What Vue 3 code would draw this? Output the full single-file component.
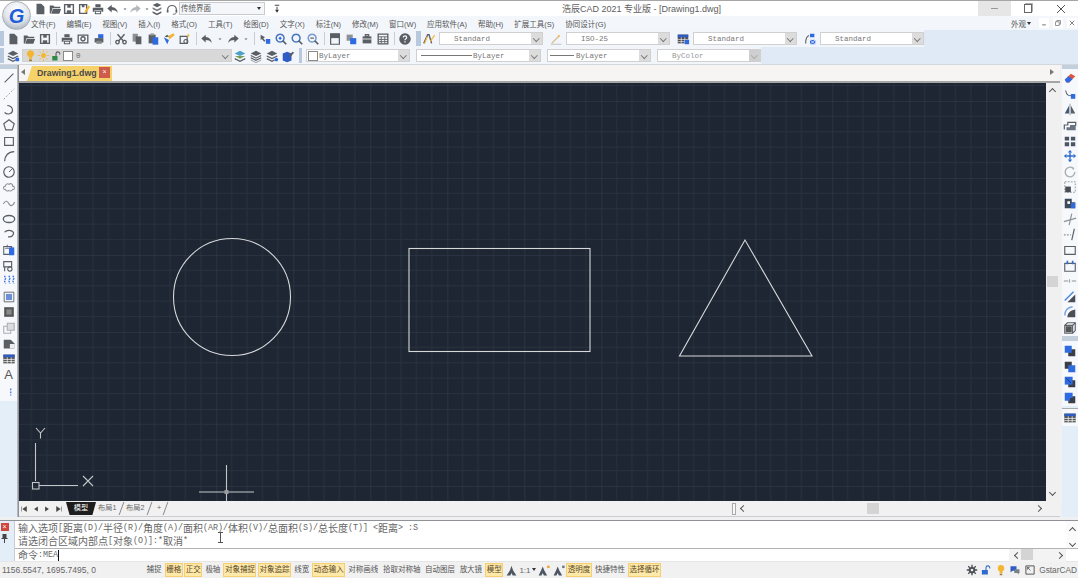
<script setup>
import { h } from 'vue'

const G = '#5a5f66'
const L = '#8d9298'
const B = '#2f6be0'
const Y = '#f2b632'

// 图标路径：[d, fill, stroke, strokeWidth, dash]
const ICONS = {
  new: [['M4 2h5.5L13 5.5V14H4z', G]],
  open: [['M2 4h4l1.5 1.5H14V7H5L3.5 13H2z', G], ['M5.5 8H15l-2 5.5H3.8z', G]],
  save: [['M3 3h10v10H3z', 'none', G, 1.6], ['M6 3h4v3.5H6z', G], ['M5.5 9.5h5V13h-5z', G]],
  saveas: [['M3 3h8v10H3z', 'none', G, 1.6], ['M5.5 3h3v3h-3z', G], ['M9 10l4-6 2 1.5-4 6-2.5 1z', Y]],
  print: [['M5 2.5h6V6H5z', G], ['M2 6.5h12V11h-2V9.5H4V11H2z', G], ['M5 10.5h6v3H5z', 'none', G, 1.2]],
  preview: [['M2.5 3.5h11v9h-11z', 'none', G, 1.5], ['M8 5.5a2.4 2.4 0 1 0 .01 0z', 'none', G, 1.6]],
  publish: [['M3 7h10v5H3z', G], ['M5 10h6v3.5H5z', '#888'], ['M7 2.5h6V7H7z', B]],
  cut: [['M4 2.5l7 8M12 2.5l-7 8', 'none', G, 1.6], ['M4 9.5a2 2 0 1 0 .01 0zM12 9.5a2 2 0 1 0 .01 0z', 'none', G, 1.5]],
  copy: [['M3 2h6v9H3z', L], ['M6.5 5H13v9H6.5z', G]],
  paste: [['M3 3h8v10H3z', G], ['M5 1.5h4V4H5z', '#999'], ['M7.5 6H14v8.5H7.5z', B]],
  match: [['M2 6l6 3-2 5z', B], ['M7 4.5l6-3 1.5 2-6 5z', Y], ['M3 5l3-2 2 2-3 1z', G]],
  block: [['M2.5 5h8v8h-8z', 'none', G, 1.4], ['M9 8.5a2.3 2.3 0 1 0 .01 0z', 'none', G, 1.2], ['M11 2l2.5 1.5-2.5 3z', Y]],
  undo: [['M6.5 3L1.5 7.5l5 4.5V9c3 0 5 .7 7 3.5C13 8.5 10.5 6 6.5 5.8z', G]],
  redo: [['M9.5 3l5 4.5-5 4.5V9c-3 0-5 .7-7 3.5C3 8.5 5.5 6 9.5 5.8z', G]],
  redog: [['M9.5 3l5 4.5-5 4.5V9c-3 0-5 .7-7 3.5C3 8.5 5.5 6 9.5 5.8z', '#b5b8bc']],
  caret: [['M5 7h6l-3 3z', G]],
  pan: [['M3 3l5 3-2 1 2.5 3-1.5 1-2.5-3L3 9z', G], ['M9 8h5v5.5H9z', B]],
  zoomr: [['M7 2.5a4.5 4.5 0 1 0 .01 0z', 'none', '#4a78c0', 1.8], ['M10 10l4 4', 'none', G, 2], ['M7 5l2 2-2 2-2-2z', B]],
  zoomw: [['M7 2.5a4.5 4.5 0 1 0 .01 0z', 'none', '#4a78c0', 1.8], ['M10 10l4 4', 'none', G, 2]],
  zoomp: [['M7 2.5a4.5 4.5 0 1 0 .01 0z', 'none', '#7a9ccf', 1.8], ['M10 10l4 4', 'none', G, 2], ['M5 7h4', 'none', G, 1.4]],
  prop: [['M3 2h10v12H3z', 'none', G, 1.4], ['M3 2h10v5H3z', G]],
  layers2: [['M3 3h7v7H3z', L], ['M7 7h7v7H7z', B]],
  box: [['M3 5h10v8H3z', G], ['M6 3h4v2H6z', 'none', G, 1.2], ['M3 8h10', 'none', '#eee', 1]],
  calc: [['M2.5 2.5h11v11h-11z', 'none', G, 1.5], ['M2.5 5.5h11M2.5 8.5h11M2.5 11h11M6 5.5v8M10 5.5v8', 'none', G, 1]],
  help: [['M8 1.5a6.5 6.5 0 1 0 .01 0z', G], ['M6 6.3c0-2.5 4-2.5 4 0 0 1.5-2 1.5-2 3', 'none', '#fff', 1.3], ['M7.3 10.5h1.4v1.4H7.3z', '#fff']],
  textst: [['M2 13L6.5 3H8l3 10', 'none', G, 1.6], ['M9 10l5-7 1 1-5 7z', Y], ['M3 13l3-8', 'none', Y, 1.4]],
  dimst: [['M3 13l9-9', 'none', '#d9b98a', 1.4], ['M2 14h12', 'none', '#c4c4c4', 1.2], ['M11 3l2 2-3 .5z', Y]],
  table: [['M2 3h12v10H2z', '#4f4f58'], ['M2 3h12v3H2z', '#2e5cc4'], ['M2 8.5h12M2 11h12M6 6v7M10 6v7', 'none', '#fff', 0.7], ['M10 9h5v5h-5z', B]],
  mleader: [['M3 13C3 8 4 5 7 4', 'none', G, 1.3], ['M8 2h5v4H8z', B], ['M8 9h6v5H8z', B], ['M8 9l6 5M14 9l-6 5', 'none', '#fff', 0.8]],
  layerman: [['M8 2l6 3-6 3-6-3z', G], ['M2 8l6 3 6-3', 'none', G, 1.5], ['M2 11l6 3 4-2', 'none', G, 1.5], ['M11 10h4v4h-4z', B]],
  bulb: [['M8 1.5a4.2 4.2 0 0 0-2 8V12h4V9.5a4.2 4.2 0 0 0-2-8z', Y], ['M6.3 12.8h3.4V15H6.3z', '#a57c28']],
  sun: [['M8 5a3 3 0 1 0 .01 0z', Y], ['M8 1v3M8 12v3M1 8h3M12 8h3M3 3l2 2M11 11l2 2M13 3l-2 2M3 13l2-2', 'none', Y, 1]],
  lockg: [['M3 8h7v6H3z', '#2f8a4a'], ['M8 8V5a2.5 2.5 0 0 1 5 0v1', 'none', '#555', 1.4]],
  lay1: [['M8 2l6 3-6 3-6-3z', '#4aa0c8'], ['M2 8l6 3 6-3z', '#7b9d58'], ['M2 11l6 3 6-3', 'none', G, 1.5]],
  lay2: [['M8 2l6 3-6 3-6-3z', G], ['M2 7.5l6 3 6-3', 'none', G, 1.3], ['M2 10l6 3 6-3', 'none', G, 1.3], ['M2 12.5l6 3 6-3', 'none', L, 1]],
  lay3: [['M8 2l6 3-6 3-6-3z', G], ['M2 8l6 3 6-3', 'none', G, 1.5], ['M2 11l6 3 3-1.5', 'none', G, 1.5], ['M13 10a2 2 0 1 0 .01 0z', B]],
  lay4: [['M2 5l5-2 5 2v8l-5 2-5-2z', '#2e5cc4'], ['M9 8l4-5 2 1-4 5z', G]],
  line: [['M3 13L13 3', 'none', G, 1.2], ['M3 13h.01M13 3h.01', 'none', B, 3]],
  xline: [['M2 14L14 2', 'none', L, 1, '2 2'], ['M5 11h.01M11 5h.01', 'none', B, 3]],
  poly: [['M3 12c3 3 9 2 9-3 0-3-3-5-6-5', 'none', G, 1.3], ['M3 12h.01M6 4h.01M12 9h.01M8 13h.01', 'none', B, 3]],
  pent: [['M8 2l6 4.5-2.3 7H4.3L2 6.5z', 'none', G, 1.3]],
  rect: [['M3 4h10v9H3z', 'none', G, 1.3], ['M13 4h.01M3 13h.01', 'none', B, 3]],
  arc: [['M3 14C3 8 7 3 14 3', 'none', G, 1.4], ['M3 14h.01M14 3h.01M5.5 6.5h.01', 'none', B, 3]],
  circle: [['M8 2a6 6 0 1 0 .01 0z', 'none', G, 1.3], ['M8 8l4-4', 'none', G, 1.1], ['M8 8h.01', 'none', B, 3]],
  cloud: [['M4 11c-3 0-3-4 0-4 0-3 3-3 4-2 2-2 5 0 4 2 3 0 3 4 0 4-1 2-3 2-4 1-2 1-3 1-4-1z', 'none', L, 1.2]],
  spline: [['M1.5 9c3-5 5-3 6.5 0s4 3 6.5-2', 'none', L, 1.3]],
  ellipse: [['M8 4c4 0 6.5 2 6.5 4s-2.5 4-6.5 4-6.5-2-6.5-4 2.5-4 6.5-4z', 'none', G, 1.5], ['M8 4h.01M1.5 8h.01M14.5 8h.01', 'none', B, 3]],
  earc: [['M3 6c2-3 8-3 10 0 1 3-2 6-6 5', 'none', G, 1.5], ['M3 6h.01M7 11h.01', 'none', B, 3]],
  insert: [['M2 4h9v9H2z', 'none', G, 1.2], ['M3.5 6h5M6 2v3', 'none', G, 1], ['M8 5h6v9H8z', B]],
  mkblock: [['M2 3h9v6H2z', 'none', G, 1.3], ['M9 9a2.5 2.5 0 1 0 .01 0z', 'none', G, 1.3], ['M3 9v5', 'none', G, 1.3]],
  point: [['M3 2l1 3-1 3 1 3M8 2l1 3-1 3 1 3M12.5 2l1 3-1 3 1 3', 'none', B, 1.5, '2 1']],
  hatch: [['M2.5 2.5h11v11h-11z', 'none', G, 1], ['M4.5 4.5h7v7h-7z', '#6e8fd8'], ['M2.5 2.5h.01M13.5 2.5h.01M2.5 13.5h.01M13.5 13.5h.01', 'none', G, 3]],
  grad: [['M2.5 2.5h11v11h-11z', '#555'], ['M5 5h6v6H5z', '#8a8a8a']],
  region: [['M2 6h8v8H2z', 'none', '#a9adb2', 1.2], ['M6 2.5h8v8H6z', '#dcdcdc', '#a9adb2', 1.2]],
  wipe: [['M2 3h8l4 4v6H2z', G], ['M9 8h5v5H9z', '#eee']],
  tbl: [['M1.5 3h13v10h-13z', '#565656'], ['M1.5 3h13v3h-13z', '#2e5cc4'], ['M1.5 8.5h13M1.5 11h13M6 6v7M10.5 6v7', 'none', '#fff', 0.8]],
  addpt: [['M3 3h.01', 'none', G, 3.5], ['M10 5v8', 'none', B, 1.4, '2 1.5'], ['M10 14h.01', 'none', G, 3.5]],
  erase: [['M2 10l7-7 5 3-7 7H4z', '#e0533d'], ['M2 10l4-4 5 3-4 4H4z', B]],
  rcopy: [['M3 3h.01', 'none', G, 4], ['M3 4c1 6 4 6 7 6', 'none', G, 1.2], ['M9 8h5v5.5H9z', B]],
  mirror: [['M2 13L7 4v9z', '#3f5a78'], ['M14 13L9 4v9z', G], ['M8 2v13', 'none', L, 1]],
  offset: [['M1.5 13V8h4V5h9v4', 'none', G, 1.4], ['M4 14v-3.5h4V8h6.5v6z', '#6a7480']],
  array: [['M2 3h5v4.5H2zM9 3h5v4.5H9zM2 9.5h5V14H2zM9 9.5h5V14H9z', '#4b5563']],
  move: [['M8 1l2.5 3h-5zM8 15l-2.5-3h5zM1 8l3-2.5v5zM15 8l-3 2.5v-5z', '#2e6ad0'], ['M8 4v8M4 8h8', 'none', '#2e6ad0', 1.6]],
  rotate: [['M13.5 8a5.5 5.5 0 1 1-2-4.2', 'none', '#a9adb2', 1.5], ['M10 2l3 1.5-1.5 2.5z', '#a9adb2']],
  scale: [['M2 2h12v12H2z', 'none', L, 1, '2 1.5'], ['M2.5 7.5H9V14H2.5z', '#4b4f55']],
  stretch: [['M2 3h8v4h4v7H2z', '#3f4a58'], ['M9 8h5v6H9z', B], ['M5 6h3v3H5z', '#fff']],
  trim: [['M1 11l14-4', 'none', L, 1.3], ['M10 2l-3 13', 'none', L, 1.3]],
  extend: [['M1 9h8', 'none', L, 1.3, '2 1.5'], ['M13 2l-3 13', 'none', G, 1.3]],
  brk: [['M2 4h12v9H2z', 'none', G, 1.3], ['M5 3.5h.01M11 3.5h.01', 'none', '#2e6ad0', 3]],
  brk2: [['M2 5h12v9H2z', 'none', G, 1.3], ['M5 2v4M11 2v4', 'none', '#2e6ad0', 1.8]],
  join: [['M1 8h5M10 8h5', 'none', L, 1.3], ['M6 8h.01M10 8h.01', 'none', G, 3], ['M7.5 6v4', 'none', L, 1]],
  chamfer: [['M5 14l9-9v9z', '#4b4f55'], ['M2 12L12 2', 'none', '#4a88d8', 1.6]],
  fillet: [['M5 14c0-5 3-8 9-9v9z', '#4b4f55'], ['M2 12C2 7 5 3 11 2', 'none', '#7aa6e0', 1.6]],
  explode: [['M2 5l3-3h9v9l-3 3H2z', 'none', G, 1.3], ['M2 5h9v9', 'none', G, 1.3], ['M11 5l3-3', 'none', G, 1.3], ['M3 6h7v7H3z', '#555']],
  ord1: [['M6 6h8v8H6z', '#3a3f46'], ['M2 2h8v8H2z', B]],
  ord2: [['M2 2h8v8H2z', '#3a3f46'], ['M6 6h8v8H6z', B]],
  ord3: [['M6 6h8v8H6z', '#3a3f46'], ['M2 2h9v9H2z', B], ['M4 4l5 5', 'none', '#224', 0.8]],
  ord4: [['M6 6h8v8H6z', '#3a3f46'], ['M2 2h9v6H8v3H2z', B]],
  first: [['M4 4v8M12 4L6 8l6 4z', '#444', '#444', 0.8]],
  prev: [['M11 4L5 8l6 4z', '#444']],
  next: [['M5 4l6 4-6 4z', '#444']],
  last: [['M12 4v8M4 4l6 4-6 4z', '#444', '#444', 0.8]],
  gear: [['M8 3.5a4.5 4.5 0 1 0 .01 0zM8 6.3a1.7 1.7 0 1 1-.01 0z', '#4b4f55'], ['M8 1v3M8 12v3M1 8h3M12 8h3M3 3l2 2M11 11l2 2M13 3l-2 2M3 13l2-2', 'none', '#4b4f55', 1.8]],
  lockb: [['M2.5 8h8v6h-8z', '#2e6ad0'], ['M8 8V5a2.5 2.5 0 0 1 5 0v1', 'none', '#2e6ad0', 1.4]],
  chat: [['M2 3h8v6H5l-3 2z', '#2e5cc4'], ['M7 7h7v5h-1v2l-2-2H7z', '#7a8088']],
  full: [['M2.5 2.5h11v11h-11z', 'none', '#555', 1.3], ['M4.5 4.5l4 4M4.5 4.5h3M4.5 4.5v3', 'none', '#555', 1.1]],
  anno: [['M8 2l2 6 4 6H9.5L8 11l-1.5 3H2l4-6z', '#4d5662']],
  annoy: [['M7 3l2 5 3.5 6h-4L7 11l-1.5 3H2l3-6z', '#4d5662'], ['M12.5 2h3v3h-3z', '#f0a033']],
  annog: [['M7 3l2 5 3.5 6h-4L7 11l-1.5 3H2l3-6z', '#4d5662'], ['M12.5 2h3v3h-3z', '#6d7480']],
  qdrop: [['M5 3h6M8 5v4', 'none', '#333', 1.2], ['M5.5 9h5L8 13z', '#333']],
  head: [['M3 9a5 5 0 0 1 10 0', 'none', G, 1.4], ['M3 9v3M13 9v3', 'none', G, 2], ['M13 12c0 1.5-2 2-4 2', 'none', G, 1]],
  stack: [['M8 1l5 2.5L8 6 3 3.5z', G], ['M3 6l5 2.5L13 6v2l-5 2.5L3 8z', '#777'], ['M3 10.5L8 13l5-2.5v2L8 15l-5-2.5z', G]],
  mdimin: [['M5 11h6', 'none', '#666', 1.4]],
  mdimax: [['M4 6h6v6H4z', 'none', '#777', 1.2], ['M6 6V4h6v6h-2', 'none', '#777', 1.2]],
  mdix: [['M4.5 4.5l7 7M11.5 4.5l-7 7', 'none', '#666', 1.3]]
}

const Icon = props =>
  h(
    'svg',
    { class: 'ic', width: props.s || 14, height: props.s || 14, viewBox: '0 0 16 16' },
    (ICONS[props.n] || []).map(([d, fill = 'none', stroke = 'none', sw = 1, dash]) =>
      h('path', { d, fill, stroke, 'stroke-width': sw, 'stroke-dasharray': dash })
    )
  )
Icon.props = ['n', 's']

const quickIcons = ['new', 'open', 'save', 'saveas', 'print', 'undo', 'caret', 'redog', 'caret', 'stack', 'head']

const menus = ['文件(F)', '编辑(E)', '视图(V)', '插入(I)', '格式(O)', '工具(T)', '绘图(D)', '文字(X)', '标注(N)', '修改(M)', '窗口(W)', '应用软件(A)', '帮助(H)', '扩展工具(S)', '协同设计(G)']

const stdGroups = [
  ['new', 'open', 'save'],
  ['print', 'preview', 'publish'],
  ['cut', 'copy', 'paste', 'match', 'block'],
  ['undo', 'caret', 'redo', 'caret'],
  ['pan', 'zoomr', 'zoomw', 'zoomp'],
  ['prop', 'layers2', 'box', 'calc'],
  ['help']
]

const leftTop = ['line', 'xline', 'poly', 'pent', 'rect', 'arc', 'circle', 'cloud', 'spline', 'ellipse', 'earc', 'insert', 'mkblock', 'point', 'hatch', 'grad', 'region', 'wipe', 'tbl']
const rightTop = ['erase', 'rcopy', 'mirror', 'offset', 'array', 'move', 'rotate', 'scale', 'stretch', 'trim', 'extend', 'brk', 'brk2', 'join', 'chamfer', 'fillet', 'explode']
const rightBottom = ['ord1', 'ord2', 'ord3', 'ord4']

const statusLeft = [
  { t: '捕捉' }, { t: '栅格', on: true }, { t: '正交', on: true }, { t: '极轴' },
  { t: '对象捕捉', on: true }, { t: '对象追踪', on: true }, { t: '线宽' }, { t: '动态输入', on: true },
  { t: '对称画线' }, { t: '拾取对称轴' }, { t: '自动图层' }, { t: '放大镜' }, { t: '模型', on: true }
]
const statusRight = [{ t: '透明度', on: true }, { t: '快捷特性' }, { t: '选择循环', on: true }]

// 命令行里中文比西文宽一倍，拆开分别设字号
const runs = text => text.match(/[\u4e00-\u9fff]+|[^\u4e00-\u9fff]+/g).map(t => ({ t, cjk: /[\u4e00-\u9fff]/.test(t) }))
const cmdLines = [
  '输入选项[距离(D)/半径(R)/角度(A)/面积(AR)/体积(V)/总面积(S)/总长度(T)] <距离> :S',
  '请选闭合区域内部点[对象(O)]:*取消*'
].map(runs)
const cmdPrompt = runs('命令:MEA')
</script>

<template>
  <div class="app">
    <div class="logo"><span>G</span></div>

    <header class="titlebar">
      <div class="quick">
        <Icon v-for="(n, i) in quickIcons" :key="i" :n="n" :class="{ mini: n === 'caret' }" />
      </div>
      <div class="workspace">传统界面<i class="tri"></i></div>
      <Icon n="qdrop" :s="12" class="qdrop" />
      <div class="title">浩辰CAD 2021 专业版 - [Drawing1.dwg]</div>
      <div class="winbtns">
        <span class="win hot"><b class="w-min"></b></span>
        <span class="win"><b class="w-max"></b></span>
        <span class="win">
          <svg width="10" height="10" viewBox="0 0 10 10"><path d="M1 1l8 8M9 1l-8 8" stroke="#555" fill="none" /></svg>
        </span>
      </div>
    </header>

    <nav class="menubar">
      <span v-for="m in menus" :key="m">{{ m }}</span>
      <div class="mdi-group">
        <span class="looks">外观<i class="tri small"></i></span>
        <span class="mdi"><Icon n="mdimin" :s="10" /></span>
        <span class="mdi"><Icon n="mdimax" :s="10" /></span>
        <span class="mdi"><Icon n="mdix" :s="10" /></span>
      </div>
    </nav>

    <div class="dock">
      <div class="tbar">
        <div class="grip"></div>
        <template v-for="(g, i) in stdGroups" :key="i">
          <div class="tgroup"><Icon v-for="(n, j) in g" :key="j" :n="n" :class="{ mini: n === 'caret' }" /></div>
          <div class="vsep"></div>
        </template>
        <div class="grip g2"></div>
        <Icon n="textst" />
        <div class="combo c-text"><span>Standard</span><i class="chev"></i></div>
        <Icon n="dimst" class="mid" />
        <div class="combo"><span>ISO-25</span><i class="chev"></i></div>
        <Icon n="table" class="mid" />
        <div class="combo"><span>Standard</span><i class="chev"></i></div>
        <Icon n="mleader" class="mid" />
        <div class="combo"><span>Standard</span><i class="chev"></i></div>
      </div>
      <div class="tbar">
        <div class="grip"></div>
        <Icon n="layerman" />
        <div class="combo layer">
          <Icon n="bulb" :s="13" />
          <Icon n="sun" :s="13" />
          <Icon n="lockg" :s="12" />
          <b class="swatch"></b>
          <em>0</em>
          <i class="chev plain"></i>
        </div>
        <div class="tgroup lay"><Icon n="lay1" /><Icon n="lay2" /><Icon n="lay3" /><Icon n="lay4" /></div>
        <div class="grip g3"></div>
        <div class="combo c-color"><b class="swatch"></b><span>ByLayer</span><i class="chev"></i></div>
        <div class="combo c-lt"><b class="ltline"></b><span>ByLayer</span><i class="chev"></i></div>
        <div class="combo c-lw"><b class="ltline short"></b><span>ByLayer</span><i class="chev"></i></div>
        <div class="combo c-plot"><span>ByColor</span><i class="chev disabled"></i></div>
      </div>
    </div>

    <main class="work">
      <aside class="side left">
        <div class="side-grip"></div>
        <div class="side-list">
          <Icon v-for="n in leftTop" :key="n" :n="n" />
          <span class="text-tool">A</span>
          <Icon n="addpt" />
        </div>
      </aside>

      <section class="center">
        <div class="doctabs">
          <i class="arr-l"></i>
          <div class="doctab">Drawing1.dwg<span class="tabclose">×</span></div>
          <i class="arr-r"></i>
        </div>

        <div class="viewrow">
          <div class="canvas">
            <svg width="1027" height="418" viewBox="19 83 1027 418">
              <defs>
                <pattern id="grid" patternUnits="userSpaceOnUse" x="524.3" y="255" width="77" height="77">
                  <path d="M15.4 0v77M30.8 0v77M46.2 0v77M61.6 0v77M0 15.4h77M0 30.8h77M0 46.2h77M0 61.6h77" stroke="#27313d" fill="none" />
                  <path d="M0 0v77M0 0h77" stroke="#2d3844" fill="none" stroke-width="1.6" />
                </pattern>
              </defs>
              <rect x="19" y="83" width="1027" height="418" fill="#1e2633" />
              <rect x="19" y="83" width="1027" height="418" fill="url(#grid)" />
              <g fill="none" stroke="#d6d8da" stroke-width="1.1">
                <circle cx="232" cy="297" r="58.5" />
                <rect x="409" y="248.5" width="181" height="103" />
                <path d="M745 240L679.5 356H812z" />
              </g>
              <g fill="none" stroke="#c4c7ca" stroke-width="1.1">
                <path d="M35.5 443v38M39 485.5h39" />
                <rect x="32.5" y="482.5" width="6.5" height="6.5" />
                <path d="M83 476l10 10M93 476l-10 10" />
                <path d="M36 428l4.5 5 4.5-5M40.5 433v5.5" />
                <path d="M226.5 465v36M199 492h55" />
              </g>
              <rect x="224.5" y="490" width="4" height="4" fill="#9a9da0" />
            </svg>
          </div>
          <div class="vscroll">
            <i class="sc up"></i>
            <b class="thumb"></b>
            <i class="sc down"></i>
          </div>
        </div>

        <div class="layoutbar">
          <div class="nav">
            <Icon n="first" :s="10" /><Icon n="prev" :s="10" /><Icon n="next" :s="10" /><Icon n="last" :s="10" />
          </div>
          <span class="ltab active">模型</span>
          <span class="ltab">布局1</span>
          <span class="ltab">布局2</span>
          <span class="ltab plus">+</span>
          <div class="hscroll">
            <b class="split"></b>
            <i class="sc left-a"></i>
            <b class="thumb"></b>
            <i class="sc right-a"></i>
          </div>
        </div>
      </section>

      <aside class="side right">
        <div class="side-grip"></div>
        <div class="side-list">
          <Icon v-for="n in rightTop" :key="n" :n="n" />
        </div>
        <div class="side-grip mid-grip"></div>
        <div class="side-list tight">
          <Icon v-for="n in rightBottom" :key="n" :n="n" />
        </div>
        <div class="side-line"></div>
        <div class="side-list"><Icon n="tbl" /></div>
      </aside>
    </main>

    <section class="cmd">
      <div class="cmd-strip">
        <span class="cmd-x">×</span>
        <svg width="7" height="9" viewBox="0 0 7 9"><path d="M1.5 0h4v4h1v1H4v4H3V5H.5V4h1z" fill="#444" /></svg>
      </div>
      <div class="cmd-body">
        <div class="cmd-history">
          <div class="cmd-lines">
            <div v-for="(line, i) in cmdLines" :key="i" class="cmd-line">
              <span v-for="(r, j) in line" :key="j" :class="{ cjk: r.cjk }">{{ r.t }}</span>
            </div>
            <svg class="ibeam" width="7" height="11" viewBox="0 0 7 11"><path d="M1 .5h5M3.5.5v10M1 10.5h5" stroke="#555" fill="none" /></svg>
          </div>
          <div class="cmd-vs"><i class="sc up"></i><i class="sc down"></i></div>
        </div>
        <div class="cmd-input">
          <div class="cmd-line">
            <span v-for="(r, j) in cmdPrompt" :key="j" :class="{ cjk: r.cjk }">{{ r.t }}</span><b class="caret"></b>
          </div>
          <div class="cmd-hs"><i class="sc left-a"></i><b class="thumb"></b><i class="sc right-a"></i></div>
        </div>
      </div>
    </section>

    <footer class="status">
      <span class="coords">1156.5547, 1695.7495, 0</span>
      <span v-for="s in statusLeft" :key="s.t" class="st" :class="{ on: s.on }">{{ s.t }}</span>
      <Icon n="anno" :s="13" />
      <span class="ratio">1:1<i class="tri small"></i></span>
      <Icon n="annoy" :s="13" />
      <Icon n="annog" :s="13" />
      <span v-for="s in statusRight" :key="s.t" class="st" :class="{ on: s.on }">{{ s.t }}</span>
      <div class="tray">
        <Icon n="gear" :s="12" />
        <Icon n="lockb" :s="12" />
        <Icon n="bulb" :s="12" />
        <Icon n="chat" :s="12" />
        <Icon n="full" :s="12" />
        <span class="brand">GstarCAD</span>
      </div>
    </footer>
  </div>
</template>

<style>
html,
body {
  margin: 0;
  background: #f0f0f0;
}
</style>

<style scoped>
.app {
  position: relative;
  width: 1078px;
  height: 578px;
  overflow: hidden;
  display: flex;
  flex-direction: column;
  font-family: "Liberation Sans", "Noto Sans CJK SC", sans-serif;
  font-size: 7.5px;
  color: #555;
  background: #f0f0f0;
}

.ic {
  flex: none;
  display: block;
}

.logo {
  position: absolute;
  left: 2px;
  top: 1px;
  width: 27px;
  height: 27px;
  border-radius: 50%;
  background: radial-gradient(circle at 50% 30%, #ffffff 0%, #dfe4ea 55%, #8e98a4 100%);
  border: 1px solid #a9b0b8;
  display: flex;
  align-items: center;
  justify-content: center;
  z-index: 2;
}

.logo span {
  font: italic bold 20px "Liberation Sans", sans-serif;
  color: #1f5fd6;
  line-height: 1;
}

/* 标题栏 */
.titlebar {
  flex: none;
  height: 16px;
  box-sizing: border-box;
  border-top: 1px solid #a6a6a6;
  background: #fff;
  display: flex;
  align-items: center;
}

.quick {
  display: flex;
  align-items: center;
  padding-left: 33px;
  width: 179px;
  box-sizing: border-box;
}

.quick .ic {
  margin-right: 0.6px;
}

.quick .mini {
  width: 8px;
  margin-right: -0.6px;
}

.workspace {
  width: 86px;
  height: 13px;
  box-sizing: border-box;
  border: 1px solid #c8ccd0;
  background: #f4f6f9;
  line-height: 11px;
  padding-left: 1px;
  position: relative;
}

.tri {
  position: absolute;
  right: 3px;
  top: 4px;
  border: 2.5px solid transparent;
  border-top: 3px solid #333;
  border-bottom: 0;
}

.tri.small {
  position: static;
  display: inline-block;
  margin-left: 1px;
  vertical-align: 2px;
}

.qdrop {
  margin-left: 6px;
}

.title {
  margin-left: 279px;
  font-size: 9px;
  color: #5e5e5e;
  white-space: nowrap;
  width: 159px;
}

.winbtns {
  margin-left: auto;
  display: flex;
  height: 100%;
  margin-right: 1px;
}

.win {
  width: 33px;
  display: flex;
  align-items: center;
  justify-content: center;
}

.win.hot {
  background: #e6e6e6;
}

.w-min {
  width: 7px;
  height: 1px;
  background: #999;
}

.w-max {
  width: 6px;
  height: 7px;
  border: 1px solid #666;
  box-shadow: 1px -1px 0 -0.2px #999;
}

/* 菜单 */
.menubar {
  flex: none;
  height: 14px;
  background: #f3f7fc;
  display: flex;
  align-items: center;
  gap: 10.9px;
  padding-left: 31px;
  white-space: nowrap;
  color: #555;
}

.mdi-group {
  margin-left: auto;
  display: flex;
  align-items: center;
  gap: 4px;
  padding-right: 1px;
}

.looks {
  width: 24px;
}

.mdi {
  width: 10px;
  height: 10px;
  background: #fff;
}

/* 工具栏 */
.dock {
  flex: none;
  background: #dfeaf6;
  height: 34px;
  border-bottom: 1px solid #d3d8de;
}

.tbar {
  height: 17px;
  width: max-content;
  display: flex;
  align-items: center;
  background: #f2f5f9;
}

.tgroup {
  display: flex;
  align-items: center;
  gap: 2px;
}

.tgroup .mini {
  width: 8px;
}

.grip {
  width: 4px;
  height: 15px;
  background: #b9c9dd;
  margin-right: 2px;
}

.g2 {
  width: 5px;
  margin: 0 1px 0 -4px;
}

.g3 {
  width: 3px;
  margin: 0 4px;
}

.vsep {
  width: 1px;
  height: 13px;
  background: #c8ced6;
  margin: 0 3.5px;
}

.combo {
  position: relative;
  flex: none;
  width: 104px;
  height: 13px;
  box-sizing: border-box;
  border: 1px solid #d0d0d0;
  background: #fff;
  display: flex;
  align-items: center;
  font-family: "Liberation Mono", monospace;
  font-size: 7.5px;
  color: #777;
}

.combo span {
  padding-left: 14px;
}

.mid {
  margin: 0 3px 0 6px;
}

.c-text {
  margin-left: 3px;
}

.chev {
  position: absolute;
  right: 0;
  top: 0;
  bottom: 0;
  width: 11px;
  background: #dcdcdc;
}

.chev::after {
  content: "";
  position: absolute;
  left: 3px;
  top: 2.5px;
  width: 3.5px;
  height: 3.5px;
  border-right: 1px solid #777;
  border-bottom: 1px solid #777;
  transform: rotate(45deg);
}

.chev.plain {
  background: none;
}

.chev.disabled {
  background: #cfcfcf;
}

.chev.disabled::after {
  opacity: 0.4;
}

.layer {
  width: 210px;
  margin-left: 2px;
  background: #d8d8d8;
  padding-left: 1px;
}

.layer em {
  font-style: normal;
  margin-left: 2px;
  color: #666;
}

.swatch {
  flex: none;
  width: 8px;
  height: 8px;
  background: #fff;
  border: 1px solid #8a8a8a;
  margin: 0 1px;
}

.lay {
  margin-left: 1px;
}

.c-color span,
.c-lt span,
.c-lw span {
  padding: 0;
}

.c-lt {
  width: 125px;
  margin-left: 6px;
}

.c-lw,
.c-plot {
  margin-left: 6px;
}

.c-plot {
  color: #999;
}

.ltline {
  flex: none;
  width: 51px;
  height: 1px;
  background: #777;
  margin: 0 1px 0 4px;
}

.ltline.short {
  width: 24px;
  margin-left: 2px;
  margin-right: 2px;
}

/* 主工作区 */
.work {
  flex: none;
  height: 452px;
  display: flex;
}

.side {
  flex: none;
  display: flex;
  flex-direction: column;
  align-items: center;
  background: #e4eef8;
}

.side.left {
  width: 17px;
  margin-right: 2px;
  box-shadow: 1px 0 0 #b5b8bc, 2px 0 0 #8f9296;
}

.side.right {
  width: 16px;
  margin-left: 2px;
}

.side-grip {
  flex: none;
  align-self: stretch;
  height: 4px;
  background: #c3cfdc;
}

.side-list {
  display: flex;
  flex-direction: column;
  align-items: center;
  gap: 1.63px;
  padding: 2px 0 1px;
  background: #f6f8fb;
  align-self: stretch;
}

.left .side-list {
  padding-bottom: 3px;
}

.text-tool {
  height: 14px;
  line-height: 14px;
  font-size: 13px;
  color: #555;
}

.mid-grip {
  height: 5px;
}

.tight {
  padding-top: 3px;
}

.side-line {
  align-self: stretch;
  height: 1px;
  background: #aaa;
  margin-top: 2px;
}

.center {
  flex: 1;
  display: flex;
  flex-direction: column;
  min-width: 0;
}

.doctabs {
  flex: none;
  height: 18px;
  box-sizing: border-box;
  border-bottom: 2px solid #a5a5a5;
  background: #f6f5f4;
  display: flex;
  align-items: flex-end;
  position: relative;
}

.arr-l,
.arr-r {
  position: absolute;
  top: 4px;
  border: 3.5px solid transparent;
}

.arr-l {
  left: 2px;
  border-right: 4px solid #777;
  border-left: 0;
}

.arr-r {
  right: 6px;
  border-left: 4px solid #777;
  border-right: 0;
}

.doctab {
  margin-left: 8px;
  width: 85px;
  height: 15px;
  box-sizing: border-box;
  background: #f5d26a;
  clip-path: polygon(5px 0, 100% 0, 100% 100%, 0 100%);
  font-size: 8.8px;
  font-weight: bold;
  color: #4a4a4a;
  line-height: 14px;
  padding-left: 10px;
  position: relative;
}

.tabclose {
  position: absolute;
  left: 72px;
  top: 1px;
  width: 11px;
  height: 11px;
  background: #cf5b4b;
  color: #fff;
  font-size: 7px;
  line-height: 10px;
  text-align: center;
  font-weight: normal;
}

.viewrow {
  flex: 1;
  display: flex;
  min-height: 0;
}

.canvas {
  width: 1027px;
  height: 418px;
  flex: none;
  overflow: hidden;
}

.canvas svg {
  display: block;
}

.vscroll {
  flex: 1;
  background: #f0f0f0;
  position: relative;
}

.sc {
  position: absolute;
  width: 4px;
  height: 4px;
  border-left: 1px solid #555;
  border-top: 1px solid #555;
}

.sc.up {
  transform: rotate(45deg);
}

.sc.down {
  transform: rotate(225deg);
}

.sc.left-a {
  transform: rotate(-45deg);
}

.sc.right-a {
  transform: rotate(135deg);
}

.vscroll .up {
  left: 4px;
  top: 6px;
}

.vscroll .down {
  left: 4px;
  bottom: 6px;
}

.vscroll .thumb {
  position: absolute;
  left: 1px;
  top: 193px;
  width: 11px;
  height: 11px;
  background: #d4d4d4;
}

.layoutbar {
  flex: none;
  height: 16px;
  box-sizing: border-box;
  border-bottom: 1px solid #c9cdd2;
  background: #f1f1f1;
  display: flex;
  align-items: center;
  position: relative;
}

.nav {
  display: flex;
  gap: 1.7px;
  width: 47px;
}

.ltab {
  box-sizing: border-box;
  width: 28px;
  height: 13px;
  line-height: 12px;
  padding-left: 2px;
  font-size: 7.2px;
  white-space: nowrap;
  position: relative;
  color: #666;
}

.ltab::after {
  content: "";
  position: absolute;
  right: 2px;
  top: 0;
  height: 13px;
  width: 1px;
  background: #888;
  transform: skewX(-20deg);
}

.ltab.active {
  width: 30px;
  background: #1d1d1d;
  color: #fff;
  padding: 0;
  text-align: center;
  clip-path: polygon(0 0, 100% 0, 88% 100%, 12% 100%);
}

.ltab.active::after {
  display: none;
}

.ltab.plus {
  width: 16px;
  padding-left: 5px;
}

.hscroll {
  position: absolute;
  left: 713px;
  right: 0;
  top: 0;
  bottom: 0;
}

.split {
  position: absolute;
  left: 0;
  top: 2px;
  width: 2px;
  height: 10px;
  border: 1px solid #aaa;
  background: #f8f8f8;
}

.hscroll .left-a {
  left: 9px;
  top: 5px;
}

.hscroll .right-a {
  right: 19px;
  top: 5px;
}

.hscroll .thumb {
  position: absolute;
  left: 135px;
  top: 2px;
  width: 12px;
  height: 11px;
  background: #d4d4d4;
}

/* 命令行 */
.cmd {
  flex: none;
  margin-top: 3px;
  height: 41px;
  border-top: 1px solid #8f9296;
  box-sizing: border-box;
  display: flex;
  background: #fff;
}

.cmd-strip {
  flex: none;
  width: 15px;
  background: #e4eef8;
  display: flex;
  flex-direction: column;
  align-items: center;
  gap: 3px;
  padding: 2px 5px 0 0;
  box-sizing: border-box;
  border-right: 1px solid #c9cdd2;
}

.cmd-x {
  width: 8px;
  height: 8px;
  background: #d0473c;
  color: #fff;
  font-size: 7px;
  line-height: 7px;
  text-align: center;
}

.cmd-body {
  flex: 1;
  display: flex;
  flex-direction: column;
  min-width: 0;
}

.cmd-history {
  height: 27px;
  flex: none;
  display: flex;
  border-bottom: 1px solid #b3b3b3;
}

.cmd-lines {
  flex: 1;
  padding: 1px 0 0 3px;
  position: relative;
}

.ibeam {
  position: absolute;
  left: 202px;
  top: 11px;
}

.cmd-line {
  height: 12.5px;
  line-height: 12.5px;
  font-family: "Liberation Mono", monospace;
  font-size: 8.333px;
  color: #666;
  white-space: pre;
  display: flex;
  align-items: center;
}

.cmd-line .cjk {
  font-family: "Noto Sans CJK SC", sans-serif;
  font-size: 10px;
  line-height: 12px;
}

.cmd-vs {
  flex: none;
  width: 12px;
  position: relative;
  background: #fbfbfb;
}

.cmd-vs .up {
  left: 4px;
  top: 7px;
}

.cmd-vs .down {
  left: 4px;
  top: 20px;
}

.cmd-input {
  flex: 1;
  display: flex;
  align-items: center;
  justify-content: space-between;
  padding-left: 3px;
}

.caret {
  width: 1px;
  height: 11px;
  background: #111;
}

.cmd-hs {
  position: relative;
  width: 57px;
  height: 100%;
  margin-right: 12px;
  background: #f3f3f3;
}

.cmd-hs .left-a {
  left: 6px;
  top: 4px;
}

.cmd-hs .right-a {
  right: 4px;
  top: 4px;
}

.cmd-hs .thumb {
  position: absolute;
  left: 12px;
  top: 0;
  width: 12px;
  height: 11px;
  background: #d4d4d4;
}

/* 状态栏 */
.status {
  flex: 1;
  display: flex;
  align-items: center;
  gap: 1.6px;
  background: #f1f1f1;
  border-top: 1px solid #e6e6e6;
  white-space: nowrap;
}

.coords {
  flex: none;
  width: 143.5px;
  padding-left: 2px;
  box-sizing: border-box;
  font-size: 8.5px;
  color: #666;
}

.st {
  box-sizing: border-box;
  height: 14px;
  line-height: 12px;
  padding: 0 0.5px;
  border: 1px solid transparent;
  color: #555;
}

.st.on {
  background: #ffe9a8;
  border-color: #f7cf73;
  color: #5a4a2a;
}

.ratio {
  color: #666;
  font-size: 8px;
}

.tray {
  margin-left: auto;
  display: flex;
  align-items: center;
  gap: 2.5px;
}

.brand {
  font-size: 8.3px;
  color: #666;
  margin: 0 1px;
}
</style>
